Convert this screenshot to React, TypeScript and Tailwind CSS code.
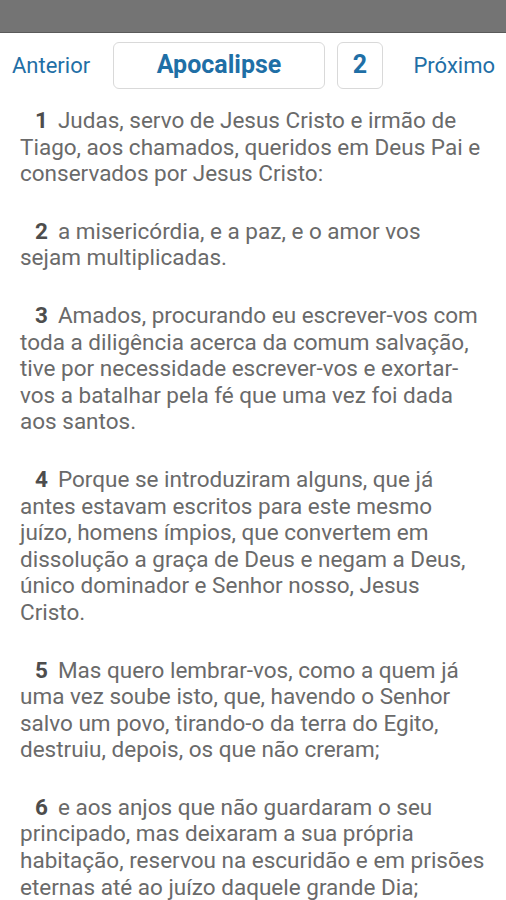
import React from 'react';

// Lines are split as the reader shows them
const verses: [number, string[]][] = [
  [1, ['Judas, servo de Jesus Cristo e irmão de', 'Tiago, aos chamados, queridos em Deus Pai e', 'conservados por Jesus Cristo:']],
  [2, ['a misericórdia, e a paz, e o amor vos', 'sejam multiplicadas.']],
  [3, ['Amados, procurando eu escrever-vos com', 'toda a diligência acerca da comum salvação,', 'tive por necessidade escrever-vos e exortar-', 'vos a batalhar pela fé que uma vez foi dada', 'aos santos.']],
  [4, ['Porque se introduziram alguns, que já', 'antes estavam escritos para este mesmo', 'juízo, homens ímpios, que convertem em', 'dissolução a graça de Deus e negam a Deus,', 'único dominador e Senhor nosso, Jesus', 'Cristo.']],
  [5, ['Mas quero lembrar-vos, como a quem já', 'uma vez soube isto, que, havendo o Senhor', 'salvo um povo, tirando-o da terra do Egito,', 'destruiu, depois, os que não creram;']],
  [6, ['e aos anjos que não guardaram o seu', 'principado, mas deixaram a sua própria', 'habitação, reservou na escuridão e em prisões', 'eternas até ao juízo daquele grande Dia;']],
];

export default function App() {
  return (
    <div className="w-[506px] h-[900px] overflow-hidden bg-white font-['Roboto',sans-serif]">
      {/* Status bar */}
      <div className="h-[33px] bg-[#747474] border-b border-[#5a5a5a]" />

      {/* Navigation */}
      <div className="flex items-center h-[64px] pl-[12px] pr-[11px]">
        <button className="text-[22px] text-[#1f6fa6] w-[90px] text-left">Anterior</button>
        <button className="ml-[11px] w-[212px] h-[47px] rounded-[6px] border border-[#d9d9d9] text-[25px] font-bold text-[#1f6fa6]">
          Apocalipse
        </button>
        <button className="ml-[12px] w-[46px] h-[47px] rounded-[6px] border border-[#d9d9d9] text-[25px] font-bold text-[#1f6fa6]">
          2
        </button>
        <button className="ml-auto text-[22px] text-[#1f6fa6]">Próximo</button>
      </div>

      {/* Verses */}
      <div className="pl-[20px] pt-[10px] flex flex-col gap-[31px]">
        {verses.map(([n, lines]) => (
          <p key={n} className="text-[22.5px] leading-[26.6px] text-[#6a6a6a] whitespace-nowrap">
            <span className="font-bold text-[#4d4d4d] pl-[15px] pr-[10px]">{n}</span>
            {lines.map((line, i) => (
              <React.Fragment key={i}>
                {i > 0 && <br />}
                {line}
              </React.Fragment>
            ))}
          </p>
        ))}
      </div>
    </div>
  );
}
